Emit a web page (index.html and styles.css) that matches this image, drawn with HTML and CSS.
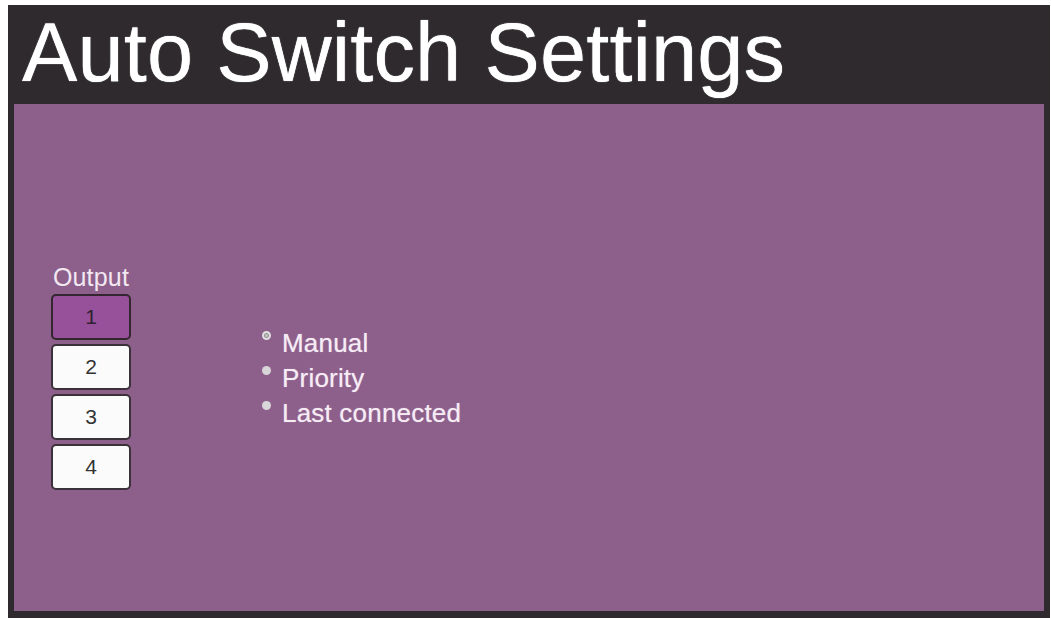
FILE: index.html
```html
<!DOCTYPE html>
<html lang="en">
<head>
<meta charset="utf-8">
<title>Auto Switch Settings</title>
<link rel="stylesheet" href="styles.css">
</head>
<body>
<div class="panel">
  <header class="panel-header">
    <h1 class="title">Auto Switch Settings</h1>
  </header>
  <main class="panel-body">
    <div class="outputs">
      <div class="outputs-label">Output</div>
      <button class="out-btn is-active">1</button>
      <button class="out-btn">2</button>
      <button class="out-btn">3</button>
      <button class="out-btn">4</button>
    </div>
    <div class="modes">
      <label class="mode"><span class="dot is-checked"></span>Manual</label>
      <label class="mode"><span class="dot"></span>Priority</label>
      <label class="mode"><span class="dot"></span>Last connected</label>
    </div>
  </main>
</div>
</body>
</html>
```
FILE: styles.css
```css
html, body {
  margin: 0;
  padding: 0;
  background: #ffffff;
  height: 100%;
  overflow: hidden;
}

body {
  font-family: "Liberation Sans", Arial, sans-serif;
}

.panel {
  margin: 5px 1px 0 8px;
  background: #2e2a2e;
  padding: 0 6px 7px 6px;
  display: flex;
  flex-direction: column;
  height: 613px;
  box-sizing: border-box;
}

.panel-header {
  height: 99px;
  flex: none;
}

.title {
  margin: 0;
  padding-left: 8px;
  font-weight: normal;
  font-size: 83px;
  line-height: 1;
  padding-top: 6px;
  color: #ffffff;
  letter-spacing: 0.1px;
  text-shadow: 0 0 1px #ffffff;
}

.panel-body {
  flex: 1;
  background: #8d5f8b;
  display: flex;
  align-items: center;
  padding: 38px 0 0 37px;
}

.outputs {
  display: flex;
  flex-direction: column;
  align-items: center;
  width: 80px;
  gap: 4px;
}

.outputs-label {
  color: #f3e8f2;
  font-size: 25px;
  line-height: 26px;
  letter-spacing: 0.2px;
  margin-bottom: 0;
}

.out-btn {
  width: 80px;
  height: 46px;
  box-sizing: border-box;
  border: 2px solid #3b3139;
  border-radius: 5px;
  background: #fbfbfb;
  color: #333333;
  font-family: "Liberation Sans", Arial, sans-serif;
  font-size: 21px;
  padding: 0;
}

.out-btn.is-active {
  background: #97509a;
  border-color: #33262f;
  color: #2e2230;
}

.modes {
  margin-left: 129px;
  margin-top: 3px;
  display: flex;
  flex-direction: column;
}

.mode {
  display: flex;
  align-items: flex-start;
  color: #f5ecf4;
  font-size: 26px;
  line-height: 35px;
  letter-spacing: 0.2px;
  text-shadow: 0 0 1px rgba(255, 240, 255, 0.6);
}

.dot {
  width: 9px;
  height: 9px;
  border-radius: 50%;
  background: #d9d6d9;
  margin: 5px 11px 0 2px;
  box-sizing: border-box;
}

.dot.is-checked {
  background: #c9c6c9;
  border: 2px solid #e2dfe2;
  box-shadow: inset 0 0 0 1px #8a8a8a;
}
```
